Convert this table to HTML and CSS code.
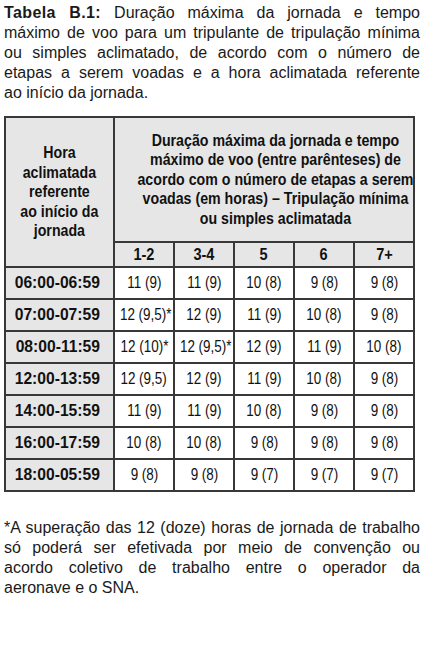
FILE: index.html
```html
<!DOCTYPE html>
<html lang="pt">
<head>
<meta charset="utf-8">
<title>Tabela B.1</title>
<link rel="stylesheet" href="styles.css">
</head>
<body>
<main class="page">
  <p class="caption">
    <span class="line"><strong>Tabela B.1:</strong> Duração máxima da jornada e tempo</span>
    <span class="line">máximo de voo para um tripulante de tripulação mínima</span>
    <span class="line">ou simples aclimatado, de acordo com o número de</span>
    <span class="line">etapas a serem voadas e a hora aclimatada referente</span>
    <span class="line last">ao início da jornada.</span>
  </p>

  <table class="grid">
    <colgroup>
      <col class="c-first">
      <col class="c-num"><col class="c-num"><col class="c-num"><col class="c-num"><col class="c-num">
    </colgroup>
    <thead>
      <tr class="head-main">
        <th rowspan="2" class="corner"><span class="cx">Hora<br>aclimatada<br>referente<br>ao início da<br>jornada</span></th>
        <th colspan="5" class="span-head"><span class="cx">Duração máxima da jornada e tempo<br>máximo de voo (entre parênteses) de<br>acordo com o número de etapas a serem<br>voadas (em horas) – Tripulação mínima<br>ou simples aclimatada</span></th>
      </tr>
      <tr class="head-sub">
        <th><span class="cx">1-2</span></th><th><span class="cx">3-4</span></th><th><span class="cx">5</span></th><th><span class="cx">6</span></th><th><span class="cx">7+</span></th>
      </tr>
    </thead>
    <tbody>
      <tr><th><span class="cx">06:00-06:59</span></th><td><span class="cx">11 (9)</span></td><td><span class="cx">11 (9)</span></td><td><span class="cx">10 (8)</span></td><td><span class="cx">9 (8)</span></td><td><span class="cx">9 (8)</span></td></tr>
      <tr><th><span class="cx">07:00-07:59</span></th><td><span class="cx">12 (9,5)*</span></td><td><span class="cx">12 (9)</span></td><td><span class="cx">11 (9)</span></td><td><span class="cx">10 (8)</span></td><td><span class="cx">9 (8)</span></td></tr>
      <tr><th><span class="cx">08:00-11:59</span></th><td><span class="cx">12 (10)*</span></td><td><span class="cx">12 (9,5)*</span></td><td><span class="cx">12 (9)</span></td><td><span class="cx">11 (9)</span></td><td><span class="cx">10 (8)</span></td></tr>
      <tr><th><span class="cx">12:00-13:59</span></th><td><span class="cx">12 (9,5)</span></td><td><span class="cx">12 (9)</span></td><td><span class="cx">11 (9)</span></td><td><span class="cx">10 (8)</span></td><td><span class="cx">9 (8)</span></td></tr>
      <tr><th><span class="cx">14:00-15:59</span></th><td><span class="cx">11 (9)</span></td><td><span class="cx">11 (9)</span></td><td><span class="cx">10 (8)</span></td><td><span class="cx">9 (8)</span></td><td><span class="cx">9 (8)</span></td></tr>
      <tr><th><span class="cx">16:00-17:59</span></th><td><span class="cx">10 (8)</span></td><td><span class="cx">10 (8)</span></td><td><span class="cx">9 (8)</span></td><td><span class="cx">9 (8)</span></td><td><span class="cx">9 (8)</span></td></tr>
      <tr><th><span class="cx">18:00-05:59</span></th><td><span class="cx">9 (8)</span></td><td><span class="cx">9 (8)</span></td><td><span class="cx">9 (7)</span></td><td><span class="cx">9 (7)</span></td><td><span class="cx">9 (7)</span></td></tr>
    </tbody>
  </table>

  <p class="note">
    <span class="line">*A superação das 12 (doze) horas de jornada de trabalho</span>
    <span class="line">só poderá ser efetivada por meio de convenção ou</span>
    <span class="line">acordo coletivo de trabalho entre o operador da</span>
    <span class="line last">aeronave e o SNA.</span>
  </p>
</main>
</body>
</html>
```

FILE: styles.css
```css
html, body {
  margin: 0;
  padding: 0;
  background: #ffffff;
}

.page {
  width: 416px;
  padding: 3px 8px 0 4px;
  font-family: "Liberation Sans", Arial, sans-serif;
  color: #1a1a1a;
}

.caption,
.note {
  margin: 0;
  font-size: 16px;
  line-height: 20px;
}

.line {
  display: block;
  white-space: nowrap;
  text-align: justify;
  text-align-last: justify;
}

.line.last {
  text-align-last: left;
}

.caption strong {
  font-weight: bold;
  letter-spacing: 0.4px;
}

.grid {
  margin-top: 13px;
  width: 410px;
  border-collapse: collapse;
  table-layout: fixed;
  font-family: "Liberation Sans", Arial, sans-serif;
  color: #111111;
}

.c-first { width: 109px; }
.c-num { width: 60px; }

.grid th,
.grid td {
  border: 2px solid #383838;
  padding: 0;
  text-align: center;
  vertical-align: middle;
  white-space: nowrap;
}

.grid th {
  background: #e6e6e6;
  font-weight: bold;
}

.cx {
  display: inline-block;
  transform-origin: 50% 50%;
}

.head-main th {
  height: 123px;
  font-size: 16.5px;
  line-height: 19.5px;
}

.head-main .cx {
  transform: scaleX(0.86);
}

.corner {
  line-height: 18.7px;
}

.corner .cx {
  transform: scaleX(0.86);
}

.head-sub th {
  height: 23px;
  font-size: 16.5px;
}

.head-sub .cx {
  transform: scaleX(0.88);
}

.grid tbody th {
  height: 30px;
  font-size: 17px;
}

.grid tbody th .cx {
  transform: translateX(-2px) scaleX(0.92);
}

.grid td {
  background: #ffffff;
  font-size: 16px;
}

.grid td .cx {
  transform: scaleX(0.84);
}

.note {
  margin-top: 26px;
}
```
